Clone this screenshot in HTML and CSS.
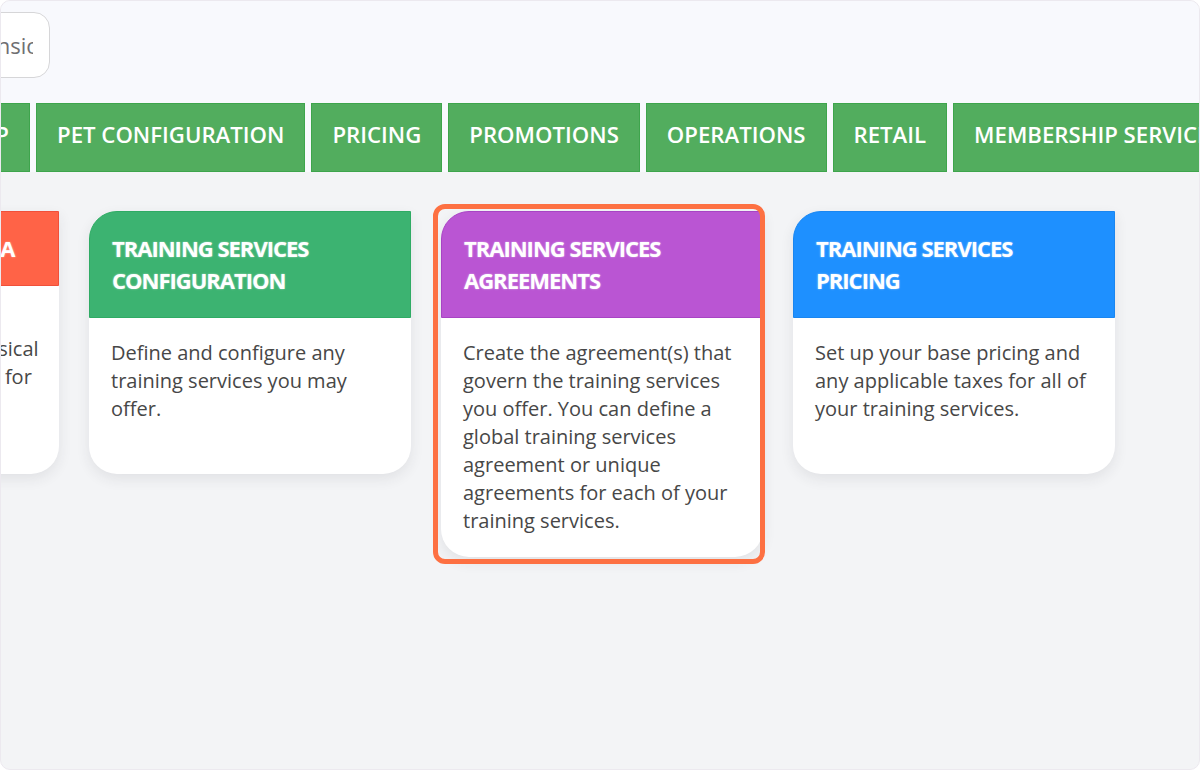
FILE: index.html
```html
<!DOCTYPE html>
<html lang="en">
<head>
<meta charset="utf-8">
<title>Training Services</title>
<link rel="stylesheet" href="styles.css">
</head>
<body>
<div class="frame">
  <div class="topbar">
    <div class="search"><div class="search-clip"><span class="search-text">Dimension</span></div></div>
    <nav class="tabs">
      <div class="tab tab-cut"><span>SETUP</span></div>
      <div class="tab">PET CONFIGURATION</div>
      <div class="tab">PRICING</div>
      <div class="tab">PROMOTIONS</div>
      <div class="tab">OPERATIONS</div>
      <div class="tab">RETAIL</div>
      <div class="tab">MEMBERSHIP SERVICES</div>
    </nav>
  </div>
  <main class="cards">
    <div class="card">
      <div class="card-head head-red">TRAINING SERVICES AREA</div>
      <div class="card-body">Define the training areas<br>to use and set up any physical<br>your spaces and locations for<br>your sessions.</div>
    </div>
    <div class="card">
      <div class="card-head head-green">TRAINING SERVICES CONFIGURATION</div>
      <div class="card-body">Define and configure any training services you may offer.</div>
    </div>
    <div class="card card-focus">
      <div class="card-head head-purple">TRAINING SERVICES AGREEMENTS</div>
      <div class="card-body">Create the agreement(s) that govern the training services you offer. You can define a global training services agreement or unique agreements for each of your training services.</div>
      <div class="focus-ring"></div>
    </div>
    <div class="card">
      <div class="card-head head-blue">TRAINING SERVICES PRICING</div>
      <div class="card-body">Set up your base pricing and any applicable taxes for all of your training services.</div>
    </div>
  </main>
</div>
</body>
</html>
```

FILE: styles.css
```css
* { box-sizing: border-box; }
html, body { margin: 0; padding: 0; }
body {
  font-family: "Open Sans", "Liberation Sans", sans-serif;
  background: #ffffff;
}
.frame {
  width: 1200px;
  height: 770px;
  border: 1px solid #ece9ef;
  border-radius: 10px;
  overflow: hidden;
  background: #f3f4f6;
}
.topbar {
  background: #f8f9fd;
  padding-top: 11px;
  height: 171px;
}
.search {
  margin-left: -30px;
  width: 79px;
  height: 66px;
  background: #fff;
  border: 1.5px solid #d6d6d8;
  border-radius: 16px;
  display: flex;
  align-items: center;
  justify-content: flex-end;
  padding-right: 16px;
}
.search-clip {
  width: 33px;
  overflow: hidden;
  display: flex;
  justify-content: flex-end;
  white-space: nowrap;
}
.search-text {
  font-size: 22px;
  color: #6f6f72;
  margin-right: -20px;
}
.tabs {
  display: flex;
  gap: 6px;
  margin-top: 25px;
  height: 69px;
}
.tab {
  flex-shrink: 0;
  display: flex;
  align-items: center;
  padding: 0 20px 7px;
  background: #52ad5e;
  border: 1px solid #3ea54c;
  color: #ffffff;
  font-size: 22.2px;
  font-weight: 600;
  white-space: nowrap;
}
.tab-cut {
  width: 29px;
  overflow: hidden;
  justify-content: flex-end;
  padding: 0 20px 7px 0;
  border-left: none;
}
.cards {
  display: flex;
  align-items: flex-start;
  gap: 30px;
  margin-top: 39px;
  margin-left: -264px;
}
.card {
  position: relative;
  flex-shrink: 0;
  width: 322px;
  min-height: 263px;
  background: #fff;
  border-radius: 28px 0 28px 28px;
  box-shadow: 0 5px 14px rgba(40, 40, 60, 0.09);
}
.card-head {
  padding: 20px 22px 21px;
  border-radius: 28px 0 0 0;
  color: #fff;
  font-size: 22px;
  font-weight: 700;
  line-height: 32px;
  letter-spacing: -1px;
  text-shadow: 0 0 2px rgba(255, 255, 255, 0.55);
}
.head-red { background: #ff6347; border: 1px solid #f0503a; }
.head-green { background: #3cb371; border: 1px solid #2fab64; }
.head-purple { background: #ba55d3; border: 1px solid #a844c4; }
.head-blue { background: #1e90ff; border: 1px solid #1a86f0; }
.card-body {
  padding: 21px 16px 22px 22px;
  color: #474747;
  font-size: 20px;
  line-height: 28px;
}
.focus-ring {
  position: absolute;
  left: -8px;
  top: -7px;
  right: -2px;
  bottom: -7px;
  border: 5px solid #fd7042;
  border-radius: 12px;
  pointer-events: none;
}
```
